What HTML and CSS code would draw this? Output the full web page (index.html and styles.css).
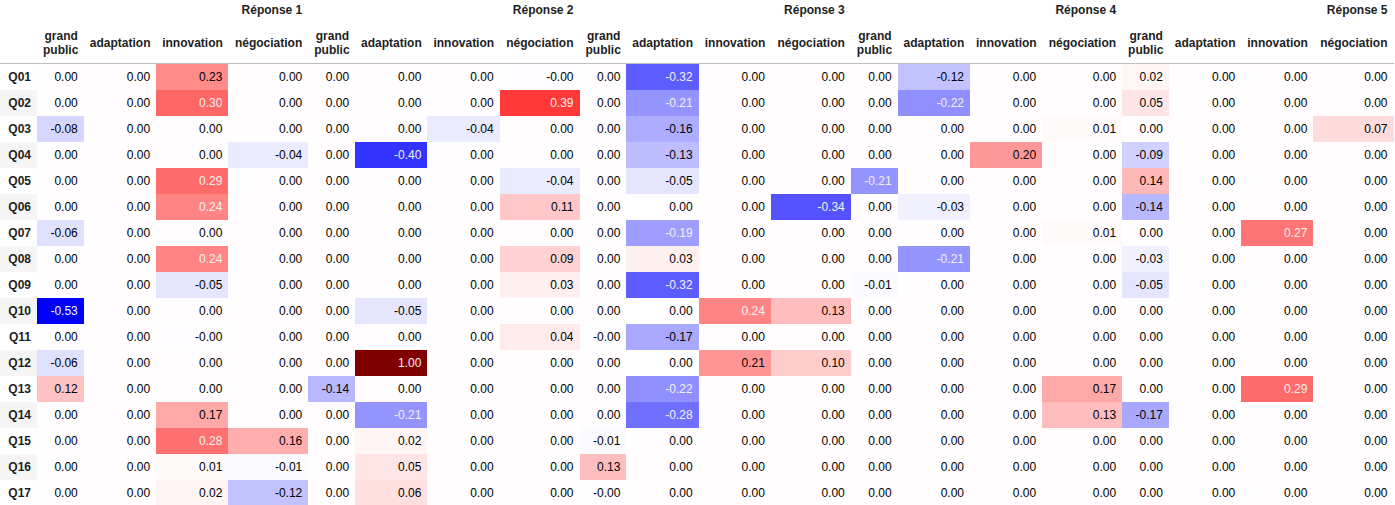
FILE: index.html
```html
<!DOCTYPE html>
<html lang="fr">
<head>
<meta charset="utf-8">
<title>Réponses</title>
<link rel="stylesheet" href="styles.css">
</head>
<body>
<table class="frame">
  <colgroup>
    <col class="c-idx">
    <col class="c-gp"><col class="c-ad"><col class="c-in"><col class="c-ne">
    <col class="c-gp"><col class="c-ad"><col class="c-in"><col class="c-ne">
    <col class="c-gp"><col class="c-ad"><col class="c-in"><col class="c-ne">
    <col class="c-gp"><col class="c-ad"><col class="c-in"><col class="c-ne">
    <col class="c-gp"><col class="c-ad"><col class="c-in"><col class="c-ne">
  </colgroup>
  <thead>
    <tr class="lvl0">
      <th class="blank"></th>
      <th colspan="4">Réponse 1</th>
      <th colspan="4">Réponse 2</th>
      <th colspan="4">Réponse 3</th>
      <th colspan="4">Réponse 4</th>
      <th colspan="4">Réponse 5</th>
    </tr>
    <tr class="lvl1">
      <th class="blank"></th>
      <th>grand public</th><th>adaptation</th><th>innovation</th><th>négociation</th>
      <th>grand public</th><th>adaptation</th><th>innovation</th><th>négociation</th>
      <th>grand public</th><th>adaptation</th><th>innovation</th><th>négociation</th>
      <th>grand public</th><th>adaptation</th><th>innovation</th><th>négociation</th>
      <th>grand public</th><th>adaptation</th><th>innovation</th><th>négociation</th>
    </tr>
  </thead>
  <tbody id="body"></tbody>
</table>
<script src="script.js"></script>
</body>
</html>
```

FILE: styles.css
```css
html, body {
  margin: 0;
  padding: 0;
  background: #ffffff;
}

.frame {
  border-collapse: collapse;
  border-spacing: 0;
  border: none;
  table-layout: fixed;
  width: 1393.5px;
  font-family: "Liberation Sans", Arial, sans-serif;
  font-size: 12px;
  line-height: 14px;
  color: #000000;
}

.c-idx { width: 37px; }
.c-gp { width: 46.8px; }
.c-ad { width: 72.4px; }
.c-in { width: 72.2px; }
.c-ne { width: 79.9px; }

.frame th,
.frame td {
  text-align: right;
  vertical-align: middle;
  padding: 6px 6px;
  border: none;
  white-space: normal;
  overflow: hidden;
}

.frame th {
  font-weight: bold;
  color: #1e1e1e;
}

.frame thead {
  border-bottom: 1px solid #bdbdbd;
}

.frame .lvl0 th {
  padding-top: 3px;
  padding-bottom: 6px;
}

.frame tbody tr:nth-child(even) {
  background: #f5f5f5;
}

.frame td {
  white-space: nowrap;
}
```

FILE: script.js
```js
var rows = [
  ["Q01", "0.00 0.00 0.23 0.00 0.00 0.00 0.00 -0.00 0.00 -0.32 0.00 0.00 0.00 -0.12 0.00 0.00 0.02 0.00 0.00 0.00"],
  ["Q02", "0.00 0.00 0.30 0.00 0.00 0.00 0.00 0.39 0.00 -0.21 0.00 0.00 0.00 -0.22 0.00 0.00 0.05 0.00 0.00 0.00"],
  ["Q03", "-0.08 0.00 0.00 0.00 0.00 0.00 -0.04 0.00 0.00 -0.16 0.00 0.00 0.00 0.00 0.00 0.01 0.00 0.00 0.00 0.07"],
  ["Q04", "0.00 0.00 0.00 -0.04 0.00 -0.40 0.00 0.00 0.00 -0.13 0.00 0.00 0.00 0.00 0.20 0.00 -0.09 0.00 0.00 0.00"],
  ["Q05", "0.00 0.00 0.29 0.00 0.00 0.00 0.00 -0.04 0.00 -0.05 0.00 0.00 -0.21 0.00 0.00 0.00 0.14 0.00 0.00 0.00"],
  ["Q06", "0.00 0.00 0.24 0.00 0.00 0.00 0.00 0.11 0.00 0.00* 0.00 -0.34 0.00 -0.03 0.00 0.00 -0.14 0.00 0.00 0.00"],
  ["Q07", "-0.06 0.00 0.00 0.00 0.00 0.00 0.00 0.00 0.00 -0.19 0.00 0.00 0.00 0.00 0.00 0.01 0.00 0.00 0.27 0.00"],
  ["Q08", "0.00 0.00 0.24 0.00 0.00 0.00 0.00 0.09 0.00 0.03 0.00 0.00 0.00 -0.21 0.00 0.00 -0.03 0.00 0.00 0.00"],
  ["Q09", "0.00 0.00 -0.05 0.00 0.00 0.00 0.00 0.03 0.00 -0.32 0.00 0.00 -0.01 0.00 0.00 0.00 -0.05 0.00 0.00 0.00"],
  ["Q10", "-0.53 0.00 0.00 0.00 0.00 -0.05 0.00 0.00 0.00 0.00* 0.24 0.13 0.00 0.00 0.00 0.00 0.00 0.00 0.00 0.00"],
  ["Q11", "0.00 0.00 -0.00 0.00 0.00 0.00 0.00 0.04 -0.00 -0.17 0.00 0.00 0.00 0.00 0.00 0.00 0.00 0.00 0.00 0.00"],
  ["Q12", "-0.06 0.00 0.00 0.00 0.00 1.00 0.00 0.00 0.00 0.00* 0.21 0.10 0.00 0.00 0.00 0.00 0.00 0.00 0.00 0.00"],
  ["Q13", "0.12 0.00 0.00 0.00 -0.14 0.00 0.00 0.00 0.00 -0.22 0.00 0.00 0.00 0.00 0.00 0.17 0.00 0.00 0.29 0.00"],
  ["Q14", "0.00 0.00 0.17 0.00 0.00 -0.21 0.00 0.00 0.00 -0.28 0.00 0.00 0.00 0.00 0.00 0.13 -0.17 0.00 0.00 0.00"],
  ["Q15", "0.00 0.00 0.28 0.16 0.00 0.02 0.00 0.00 -0.01 0.00 0.00 0.00 0.00 0.00 0.00 0.00 0.00 0.00 0.00 0.00"],
  ["Q16", "0.00 0.00 0.01 -0.01 0.00 0.05 0.00 0.00 0.13 0.00 0.00 0.00 0.00 0.00 0.00 0.00 0.00 0.00 0.00 0.00"],
  ["Q17", "0.00 0.00 0.02 -0.12 0.00 0.06 0.00 0.00 -0.00 0.00 0.00 0.00 0.00 0.00 0.00 0.00 0.00 0.00 0.00 0.00"]
];

function seismic(v) {
  var p = (v + 1) / 2;
  if (p < 0) p = 0;
  if (p > 1) p = 1;
  var r, g, b, t;
  if (p < 0.25) {
    t = p / 0.25; r = 0; g = 0; b = 0.3 + 0.7 * t;
  } else if (p < 0.5) {
    t = (p - 0.25) / 0.25; r = t; g = t; b = 1;
  } else if (p < 0.75) {
    t = (p - 0.5) / 0.25; r = 1; g = 1 - t; b = 1 - t;
  } else {
    t = (p - 0.75) / 0.25; r = 1 - 0.5 * t; g = 0; b = 0;
  }
  return [r, g, b];
}

function lin(c) {
  return c <= 0.03928 ? c / 12.92 : Math.pow((c + 0.055) / 1.055, 2.4);
}

var body = document.getElementById("body");
rows.forEach(function (row) {
  var tr = document.createElement("tr");
  var th = document.createElement("th");
  th.textContent = row[0];
  tr.appendChild(th);
  row[1].split(" ").forEach(function (s) {
    var v, label = s;
    if (s === "0.00*") { v = 0; label = "0.00"; }
    else if (s === "0.00") { v = 0.0035; }
    else if (s === "-0.00") { v = -0.0035; }
    else { v = parseFloat(s); }
    var c = seismic(v);
    var L = 0.2126 * lin(c[0]) + 0.7152 * lin(c[1]) + 0.0722 * lin(c[2]);
    var td = document.createElement("td");
    td.textContent = label;
    td.style.backgroundColor = "rgb(" + Math.round(c[0] * 255) + "," + Math.round(c[1] * 255) + "," + Math.round(c[2] * 255) + ")";
    td.style.color = L < 0.408 ? "#f1f1f1" : "#000000";
    tr.appendChild(td);
  });
  body.appendChild(tr);
});
```
